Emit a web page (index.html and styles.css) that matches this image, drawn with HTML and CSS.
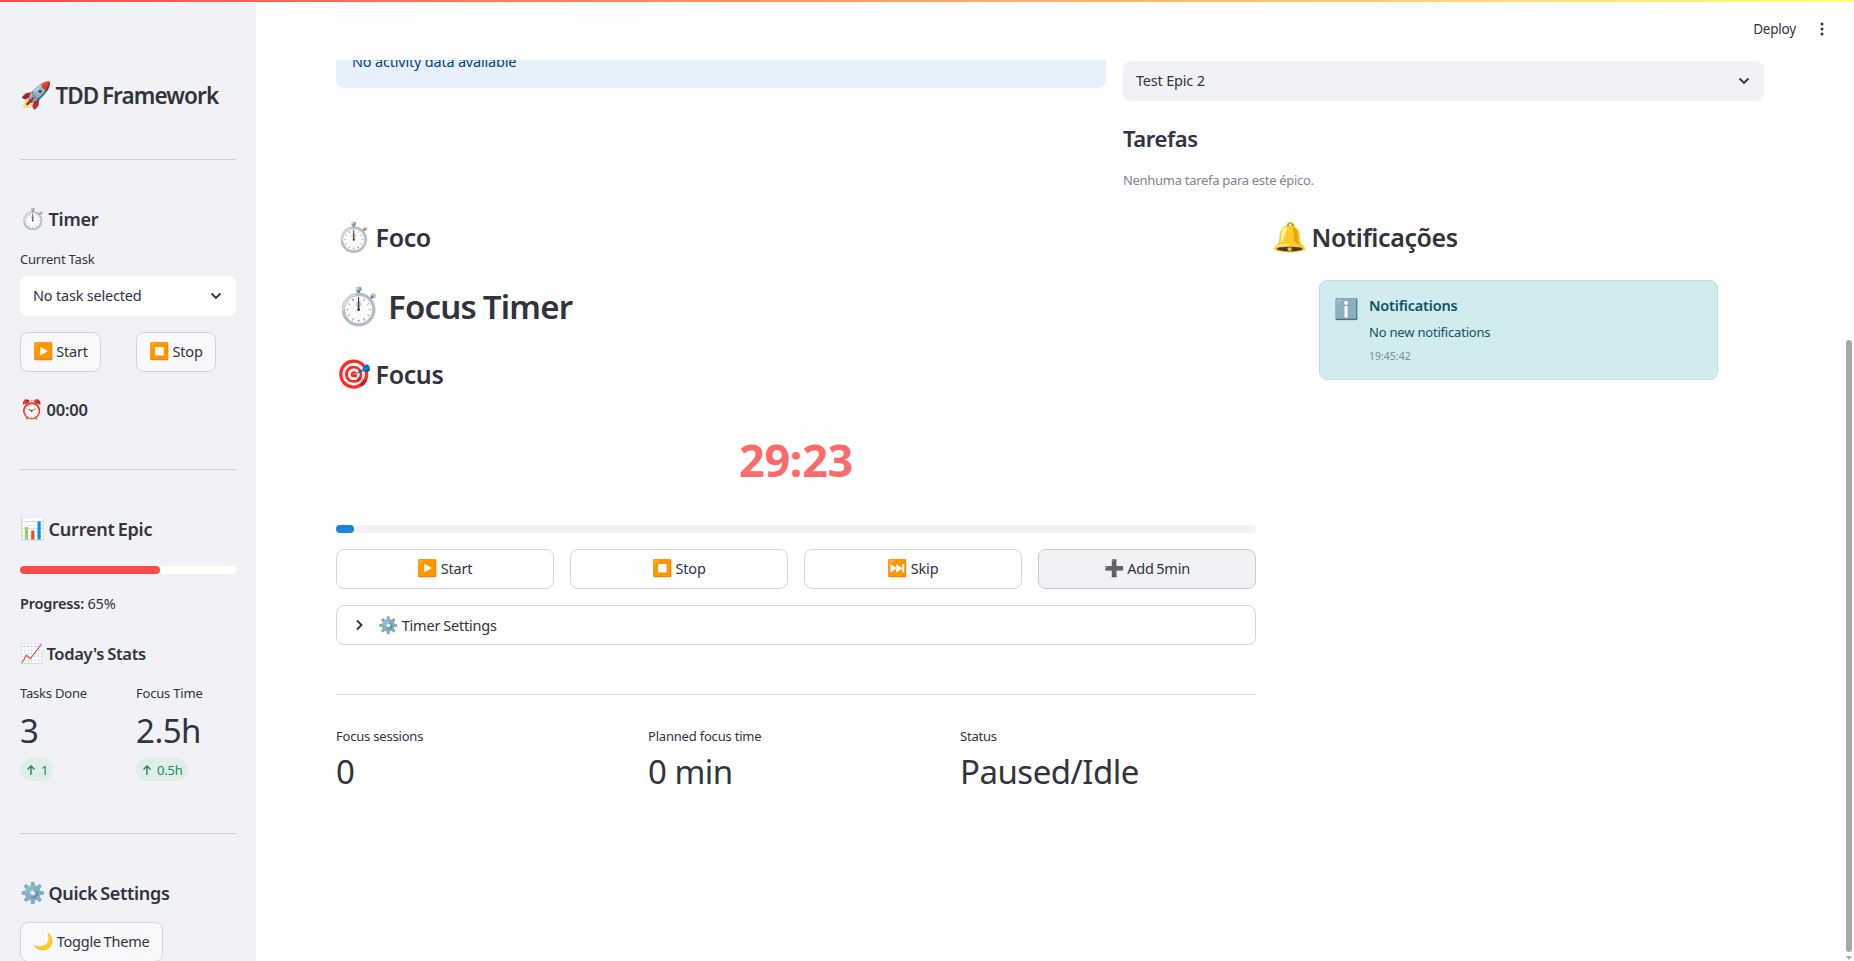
FILE: index.html
```html
<!DOCTYPE html>
<html lang="en">
<head>
    <meta charset="UTF-8">
    <title>TDD Framework</title>
    <link rel="stylesheet" href="styles.css">
</head>
<body>
    <div class="top-bar"></div>
    <div class="app">
        <aside class="sidebar">
            <h2 class="brand"><span class="emoji">🚀</span> TDD Framework</h2>
            <hr class="rule rule-brand">

            <h3 class="side-title side-timer"><span class="emoji">⏱️</span> Timer</h3>
            <label class="side-label">Current Task</label>
            <div class="select select-white">
                <span>No task selected</span>
                <svg class="chevron" viewBox="0 0 16 16"><path d="M3.5 5.5 8 10l4.500-4.500"/></svg>
            </div>
            <div class="side-buttons">
                <button class="btn btn-side btn-start"><span class="emoji">▶️</span> Start</button>
                <button class="btn btn-side btn-stop"><span class="emoji">⏹️</span> Stop</button>
            </div>
            <p class="clock"><span class="emoji">⏰</span> 00:00</p>
            <hr class="rule rule-clock">

            <h3 class="side-title side-epic"><span class="emoji">📊</span> Current Epic</h3>
            <div class="epic-track"><div class="epic-fill" style="width: 65%"></div></div>
            <p class="epic-text"><strong>Progress:</strong> 65%</p>
            <h4 class="side-subtitle"><span class="emoji">📈</span> Today's Stats</h4>
            <div class="side-stats">
                <div class="side-stat">
                    <div class="side-label">Tasks Done</div>
                    <div class="side-value">3</div>
                    <span class="delta">
                        <svg class="delta-arrow" viewBox="0 0 12 12"><path d="M6 11V2M2.500 5.500 6 2l3.500 3.500"/></svg>
                        1
                    </span>
                </div>
                <div class="side-stat">
                    <div class="side-label">Focus Time</div>
                    <div class="side-value">2.5h</div>
                    <span class="delta">
                        <svg class="delta-arrow" viewBox="0 0 12 12"><path d="M6 11V2M2.500 5.500 6 2l3.500 3.500"/></svg>
                        0.5h
                    </span>
                </div>
            </div>
            <hr class="rule rule-stats">

            <h3 class="side-title side-quick"><span class="emoji">⚙️</span> Quick Settings</h3>
            <button class="btn btn-side btn-theme"><span class="emoji">🌙</span> Toggle Theme</button>
        </aside>

        <main class="main">
            <header class="toolbar">
                <span class="deploy">Deploy</span>
                <svg class="kebab" viewBox="0 0 16 16"><circle cx="8" cy="3" r="1.500"/><circle cx="8" cy="8" r="1.500"/><circle cx="8" cy="13" r="1.500"/></svg>
            </header>

            <section class="top-row">
                <div class="alert-box"><span>No activity data available</span></div>
                <div class="epic-col">
                    <div class="select select-grey">
                        <span>Test Epic 2</span>
                        <svg class="chevron" viewBox="0 0 16 16"><path d="M3.5 5.5 8 10l4.500-4.500"/></svg>
                    </div>
                    <h3 class="tasks-title">Tarefas</h3>
                    <p class="tasks-empty">Nenhuma tarefa para este épico.</p>
                </div>
            </section>

            <section class="focus-row">
                <div class="focus-col">
                    <h3 class="heading"><span class="emoji">⏱️</span> Foco</h3>
                    <h2 class="heading-big"><span class="emoji">⏱️</span> Focus Timer</h2>
                    <h3 class="heading heading-focus"><span class="emoji">🎯</span> Focus</h3>
                    <div class="countdown">29:23</div>
                    <div class="timer-track"><div class="timer-fill" style="width: 2%"></div></div>
                    <div class="timer-buttons">
                        <button class="btn"><span class="emoji">▶️</span> Start</button>
                        <button class="btn"><span class="emoji">⏹️</span> Stop</button>
                        <button class="btn"><span class="emoji">⏭️</span> Skip</button>
                        <button class="btn btn-hover"><span class="emoji">➕</span> Add 5min</button>
                    </div>
                    <div class="expander">
                        <svg class="expander-arrow" viewBox="0 0 16 16"><path d="M6 3.500 10.500 8 6 12.500"/></svg>
                        <span><span class="emoji">⚙️</span> Timer Settings</span>
                    </div>
                    <hr class="rule rule-main">
                    <div class="metrics">
                        <div class="metric">
                            <div class="metric-label">Focus sessions</div>
                            <div class="metric-value">0</div>
                        </div>
                        <div class="metric">
                            <div class="metric-label">Planned focus time</div>
                            <div class="metric-value">0 min</div>
                        </div>
                        <div class="metric">
                            <div class="metric-label">Status</div>
                            <div class="metric-value">Paused/Idle</div>
                        </div>
                    </div>
                </div>
                <div class="notify-col">
                    <h3 class="heading"><span class="emoji">🔔</span> Notificações</h3>
                    <div class="notify-card">
                        <div class="notify-icon">ℹ️</div>
                        <div class="notify-body">
                            <div class="notify-title">Notifications</div>
                            <div class="notify-text">No new notifications</div>
                            <div class="notify-time">19:45:42</div>
                        </div>
                    </div>
                </div>
            </section>
        </main>
    </div>
    <div class="scroll-thumb"></div>
    <div class="scroll-arrow"></div>
</body>
</html>
```

FILE: styles.css
```css
/* General */
* {
    box-sizing: border-box;
}

html, body {
    height: 100%;
}

body {
    margin: 0;
    overflow: hidden;
    font-family: "Noto Sans", "Noto Color Emoji", sans-serif;
    color: #31333f;
    background-color: #fff;
}

h2, h3, h4, p {
    margin: 0;
}

.emoji {
    font-size: 1.14em;
    line-height: 1;
    letter-spacing: 0;
}

.top-bar {
    height: 2px;
    background: linear-gradient(90deg, #ff4b4b, #fffd80);
}

.app {
    display: flex;
    height: 959px;
}

button {
    font-family: inherit;
    color: inherit;
}

.rule {
    border: none;
    border-top: 1px solid #cfd1d6;
    margin: 0;
}

/* Sidebar */
.sidebar {
    width: 256px;
    flex-shrink: 0;
    padding: 78px 20px 0;
    background-color: #f0f2f6;
    overflow: hidden;
}

.brand {
    height: 32px;
    font-size: 22.500px;
    font-weight: 600;
    line-height: 32px;
    letter-spacing: -0.9px;
    word-spacing: -1.500px;
}

.rule-brand {
    margin-top: 47px;
}

.side-title {
    height: 26px;
    font-size: 18px;
    font-weight: 600;
    line-height: 26px;
    letter-spacing: -0.2px;
    word-spacing: -1.500px;
}

.side-timer {
    margin-top: 46px;
}

.side-label {
    display: block;
    font-size: 13px;
    line-height: 18px;
    letter-spacing: -0.2px;
}

.side-timer + .side-label {
    margin-top: 18px;
}

.select {
    display: flex;
    align-items: center;
    justify-content: space-between;
    height: 40px;
    padding-bottom: 2px;
    border-radius: 8px;
    font-size: 14.500px;
    letter-spacing: -0.2px;
}

.select-white {
    margin-top: 8px;
    padding-left: 13px;
    padding-right: 12px;
    background-color: #fff;
}

.select-grey {
    padding-left: 13px;
    padding-right: 12px;
    background-color: #f0f2f6;
}

.chevron {
    width: 16px;
    height: 16px;
    margin-top: 2px;
    fill: none;
    stroke: #31333f;
    stroke-width: 1.800;
}

.side-buttons {
    display: flex;
    gap: 35px;
    margin-top: 16px;
}

.btn {
    height: 40px;
    padding: 0 12px 2px;
    background-color: #fff;
    border: 1px solid #d3d5da;
    border-radius: 8px;
    font-size: 14.500px;
    letter-spacing: -0.2px;
    word-spacing: -1px;
    white-space: nowrap;
}

.btn-side {
    background-color: #f9f9fb;
}

.btn-start {
    width: 81px;
}

.btn-stop {
    width: 80px;
}

.btn-theme {
    width: 143px;
}

.clock {
    height: 22px;
    margin-top: 27px;
    font-size: 16.500px;
    font-weight: 600;
    line-height: 22px;
    letter-spacing: -0.2px;
    word-spacing: -1px;
}

.rule-clock {
    margin-top: 48px;
}

.side-epic {
    margin-top: 46px;
}

.epic-track {
    height: 8px;
    margin-top: 24px;
    background-color: #fff;
    border-radius: 4px;
}

.epic-fill {
    height: 100%;
    background-color: #ff4b4b;
    border-radius: 4px;
}

.epic-text {
    margin-top: 18px;
    font-size: 14.500px;
    line-height: 22px;
    letter-spacing: -0.2px;
}

.epic-text strong {
    font-weight: 600;
}

.side-subtitle {
    height: 24px;
    margin-top: 28px;
    font-size: 16.500px;
    font-weight: 600;
    line-height: 24px;
    letter-spacing: -0.3px;
    word-spacing: -1px;
}

.side-stats {
    display: flex;
    margin-top: 18px;
}

.side-stat {
    flex: 0 0 116px;
}

.side-value {
    margin-top: 6px;
    font-size: 33px;
    line-height: 46px;
    letter-spacing: -0.5px;
}

.delta {
    display: inline-flex;
    align-items: center;
    gap: 4px;
    height: 23px;
    margin-top: 4px;
    padding: 0 5px;
    background-color: #e0eeea;
    border-radius: 12px;
    color: #21884f;
    font-size: 13px;
    letter-spacing: -0.2px;
}

.delta-arrow {
    width: 12px;
    height: 12px;
    fill: none;
    stroke: #21884f;
    stroke-width: 1.400;
}

.rule-stats {
    margin-top: 52px;
}

.side-quick {
    margin-top: 46px;
    margin-bottom: 16px;
    letter-spacing: -0.3px;
}

/* Main area */
.main {
    flex: 1;
    min-width: 0;
    padding: 0 90px 0 80px;
    overflow: hidden;
}

.toolbar {
    display: flex;
    align-items: center;
    justify-content: flex-end;
    gap: 18px;
    height: 58px;
    margin-right: -80px;
    padding-right: 14px;
    padding-bottom: 4px;
    font-size: 13.500px;
}

.deploy {
    letter-spacing: -0.2px;
}

.kebab {
    width: 16px;
    height: 16px;
    fill: #31333f;
}

.top-row {
    display: flex;
    gap: 17px;
}

.alert-box {
    display: flex;
    align-items: flex-end;
    flex-shrink: 0;
    width: 770px;
    height: 28px;
    padding: 0 16px 17px;
    overflow: hidden;
    background-color: #e7f1fb;
    border-radius: 0 0 8px 8px;
    color: #004280;
    font-size: 14.500px;
    letter-spacing: -0.2px;
    line-height: 20px;
}

.epic-col {
    flex: 1;
    margin-top: 1px;
}

.tasks-title {
    margin-top: 19px;
    font-size: 22px;
    font-weight: 600;
    line-height: 36px;
    letter-spacing: -0.4px;
}

.tasks-empty {
    margin-top: 14px;
    color: #808495;
    font-size: 13px;
    line-height: 20px;
    letter-spacing: -0.3px;
}

.focus-row {
    display: flex;
    gap: 16px;
    margin-top: 29px;
}

.focus-col {
    width: 920px;
    flex-shrink: 0;
}

.notify-col {
    flex: 1;
}

.heading {
    height: 36px;
    font-size: 25px;
    font-weight: 600;
    line-height: 36px;
    letter-spacing: -0.4px;
    word-spacing: -2px;
}

.heading-big {
    height: 48px;
    margin-top: 28px;
    font-size: 33px;
    font-weight: 600;
    line-height: 48px;
    letter-spacing: -0.8px;
    word-spacing: -1px;
}

.heading-big .emoji {
    font-size: 1.100em;
}

.heading-focus {
    margin-top: 25px;
}

.countdown {
    margin-top: 38px;
    color: #ff6b6b;
    font-size: 45px;
    font-weight: 700;
    line-height: 60px;
    letter-spacing: -0.3px;
    text-align: center;
}

.timer-track {
    height: 8px;
    margin-top: 35px;
    background-color: #f0f2f6;
    border-radius: 4px;
}

.timer-fill {
    height: 100%;
    background-color: #1c83e1;
    border-radius: 4px;
}

.timer-buttons {
    display: grid;
    grid-template-columns: repeat(4, 1fr);
    gap: 16px;
    margin-top: 16px;
}

.btn-hover {
    background-color: #f0f2f6;
    border-color: #c8cad0;
}

.expander {
    display: flex;
    align-items: center;
    gap: 11px;
    height: 40px;
    margin-top: 16px;
    padding-left: 14px;
    border: 1px solid #d3d5da;
    border-radius: 8px;
    font-size: 14.500px;
    letter-spacing: -0.2px;
    word-spacing: -0.500px;
}

.expander-arrow {
    width: 16px;
    height: 16px;
    fill: none;
    stroke: #31333f;
    stroke-width: 1.800;
}

.rule-main {
    margin-top: 49px;
    border-top-color: #d9dadd;
}

.metrics {
    display: grid;
    grid-template-columns: repeat(3, 312px);
    margin-top: 32px;
}

.metric-label {
    font-size: 13px;
    line-height: 18px;
    letter-spacing: -0.2px;
}

.metric-value {
    margin-top: 4px;
    font-size: 33px;
    line-height: 46px;
    letter-spacing: -0.5px;
}

/* Notifications */
.notify-card {
    display: flex;
    width: 399px;
    height: 100px;
    margin: 25px 0 0 47px;
    padding: 14px 14px;
    background-color: #d1ebf0;
    border: 1px solid #b9e0e6;
    border-radius: 8px;
}

.notify-icon {
    width: 35px;
    font-size: 20px;
    line-height: 28px;
}

.notify-title {
    color: #0d5563;
    font-size: 14.500px;
    font-weight: 600;
    line-height: 20px;
    letter-spacing: -0.2px;
}

.notify-text {
    margin-top: 7px;
    color: #17515c;
    font-size: 13px;
    line-height: 20px;
    letter-spacing: -0.2px;
}

.notify-time {
    margin-top: 6px;
    color: #7f8b90;
    font-size: 10.500px;
    line-height: 16px;
}

/* Fake page scrollbar lying over the main area */
.scroll-thumb {
    position: absolute;
    top: 340px;
    right: 2px;
    width: 6px;
    height: 612px;
    background-color: #a8a8ab;
    border-radius: 3px;
}

.scroll-arrow {
    position: absolute;
    top: 956px;
    right: 2px;
    border-left: 3px solid transparent;
    border-right: 3px solid transparent;
    border-top: 4px solid #a8a8ab;
}
```
